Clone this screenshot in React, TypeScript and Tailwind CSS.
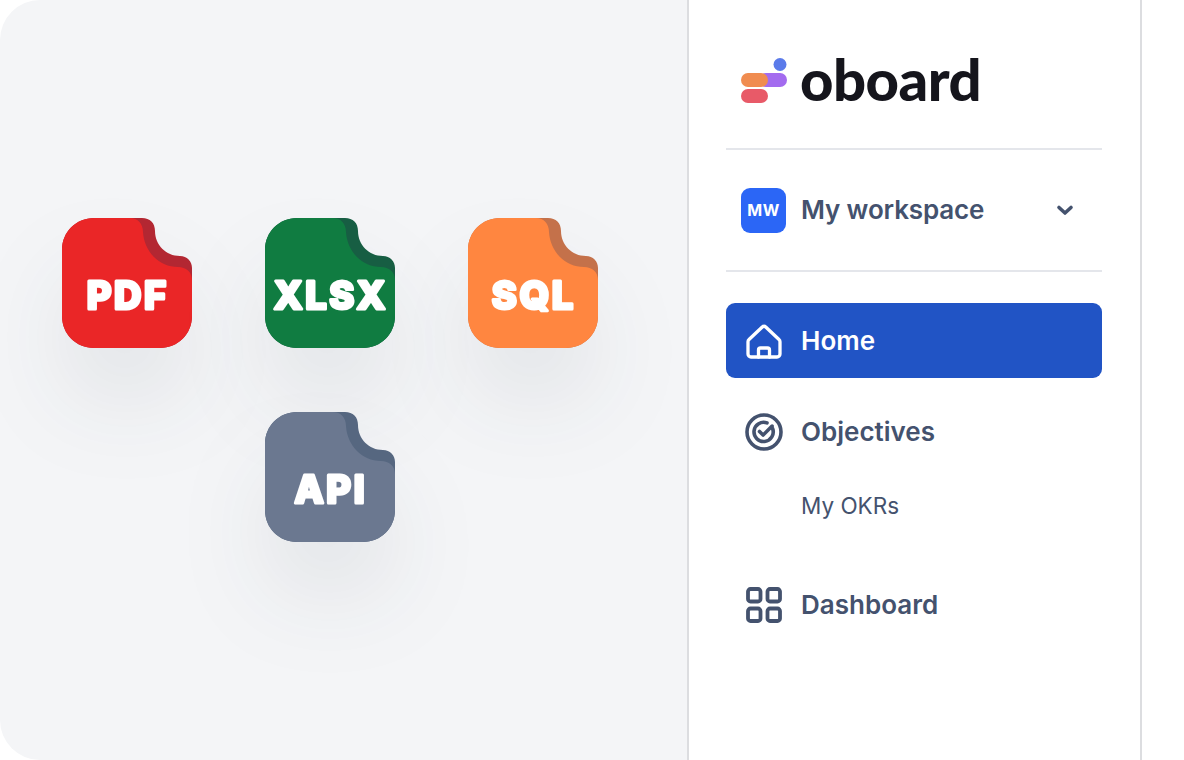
import React from "react";

const ff = "font-['Inter','Liberation_Sans',sans-serif]";

function FileIcon({ label, main, dark }: { label: string; main: string; dark: string }) {
  return (
    <div className="w-[130px] h-[130px]">
      <svg
        width="130"
        height="130"
        viewBox="0 0 130 130"
        className="block overflow-visible drop-shadow-[0_54px_44px_rgba(30,40,60,0.075)]"
      >
        <path
          fill={dark}
          d="M32 0H80C88 0 93 5 93 13C93 27 104 38 118 38C125 38 130 43 130 50V98C130 116 116 130 98 130H32C14 130 0 116 0 98V32C0 14 14 0 32 0Z"
        />
        <path
          fill={main}
          d="M32 0H68C76 0 81 6 81 14C82 33 97 49 116 49C124 49 130 54 130 62V98C130 116 116 130 98 130H32C14 130 0 116 0 98V32C0 14 14 0 32 0Z"
        />
        <text
          x="65.8"
          y="90.5"
          textAnchor="middle"
          fill="#fff"
          stroke="#fff"
          strokeWidth="3"
          strokeLinejoin="round"
          fontFamily="Inter, sans-serif"
          fontWeight="800"
          fontSize="38"
          letterSpacing="2.6"
        >
          {label}
        </text>
      </svg>
    </div>
  );
}

function NavRow({ icon, label, active }: { icon: React.ReactNode; label: string; active?: boolean }) {
  return (
    <div className={`h-[75px] rounded-[9px] flex items-center ${active ? "bg-[#2154c5] text-white" : "text-[#44526e]"}`}>
      <div className="w-[75px] flex justify-center pl-[1px]">{icon}</div>
      <span className="text-[26px] font-semibold leading-none">{label}</span>
    </div>
  );
}

export default function App() {
  return (
    <div className={`w-[1184px] h-[760px] bg-white flex overflow-hidden ${ff}`}>
      <div className="w-[687px] h-full bg-[#f4f5f7] rounded-l-[40px] pl-[62px] flex items-center">
        <div className="grid grid-cols-[130px_130px_130px] gap-x-[73px] gap-y-[64px]">
          <FileIcon label="PDF" main="#ea2627" dark="#b32732" />
          <FileIcon label="XLSX" main="#107c41" dark="#175e43" />
          <FileIcon label="SQL" main="#ff8640" dark="#c4714a" />
          <div />
          <FileIcon label="API" main="#6b7890" dark="#566780" />
        </div>
      </div>

      <div className="w-[455px] h-full border-x-2 border-[#dcdde0] pl-[37px] pr-[38px] flex flex-col">
        <div className="h-[150px] border-b-2 border-[#e4e6eb] flex items-center pl-[15px] pt-[12px] shrink-0">
          <svg width="46" height="46" viewBox="0 0 46 46" className="shrink-0">
            <circle cx="39" cy="7.5" r="6.5" fill="#5b7bea" />
            <rect x="18" y="16" width="28" height="14" rx="7" fill="#a36bef" />
            <rect x="0" y="16" width="27" height="14" rx="7" fill="#f08c50" />
            <rect x="0" y="32" width="27" height="14" rx="7" fill="#e85a68" />
          </svg>
          <span className="ml-[13px] font-['Lato',sans-serif] text-[58px] font-black leading-none text-[#15151c] tracking-[-0.5px] -translate-y-[1px]">oboard</span>
        </div>

        <div className="h-[122px] border-b-2 border-[#e4e6eb] flex items-center pl-[15px] pr-[28px] shrink-0">
          <div className="w-[45px] h-[45px] rounded-[9px] bg-[#2b66f6] text-white flex items-center justify-center text-[16px] font-bold tracking-[0.5px]">
            MW
          </div>
          <span className="ml-[15px] text-[26px] font-semibold text-[#44526e] leading-none flex-1 tracking-[-0.15px]">My workspace</span>
          <svg width="18" height="18" viewBox="0 0 18 18" fill="none" stroke="#44526e" strokeWidth="3.6" strokeLinecap="round" strokeLinejoin="round">
            <path d="M3 6.5 9 12l6-5.5" />
          </svg>
        </div>

        <div className="pt-[31px] flex flex-col">
          <NavRow
            active
            label="Home"
            icon={
              <svg width="36" height="36" viewBox="0 0 36 36" fill="none" stroke="#fff" strokeWidth="3.3" strokeLinejoin="round" strokeLinecap="round">
                <path d="M3 16.5 16 4.2a3 3 0 0 1 4 0l13 12.3a3 3 0 0 1 1 2.2V31a3 3 0 0 1-3 3H5a3 3 0 0 1-3-3V18.7a3 3 0 0 1 1-2.2Z" />
                <path d="M12.5 34v-7a2 2 0 0 1 2-2h7a2 2 0 0 1 2 2v7" />
              </svg>
            }
          />
          <div className="mt-[16px]">
            <NavRow
              label="Objectives"
              icon={
                <svg width="38" height="38" viewBox="0 0 38 38" fill="none" stroke="#44526e" strokeWidth="3.6" strokeLinecap="round" strokeLinejoin="round">
                  <circle cx="19" cy="19" r="17" />
                  <path d="M27.6 15.5A9.6 9.6 0 1 1 22 9.9" />
                  <path d="m14.5 18.5 3.6 3.6 9-9" />
                </svg>
              }
            />
          </div>
          <div className="h-[75px] pl-[75px] flex items-center text-[22.5px] leading-none text-[#44526e]">My OKRs</div>
          <div className="mt-[23px]">
            <NavRow
              label="Dashboard"
              icon={
                <svg width="36" height="36" viewBox="0 0 36 36" fill="none" stroke="#44526e" strokeWidth="3.8" strokeLinejoin="round">
                  <rect x="2" y="2" width="12.5" height="12.5" rx="2.5" />
                  <rect x="21.5" y="2" width="12.5" height="12.5" rx="2.5" />
                  <rect x="2" y="21.5" width="12.5" height="12.5" rx="2.5" />
                  <rect x="21.5" y="21.5" width="12.5" height="12.5" rx="2.5" />
                </svg>
              }
            />
          </div>
        </div>
      </div>
    </div>
  );
}
